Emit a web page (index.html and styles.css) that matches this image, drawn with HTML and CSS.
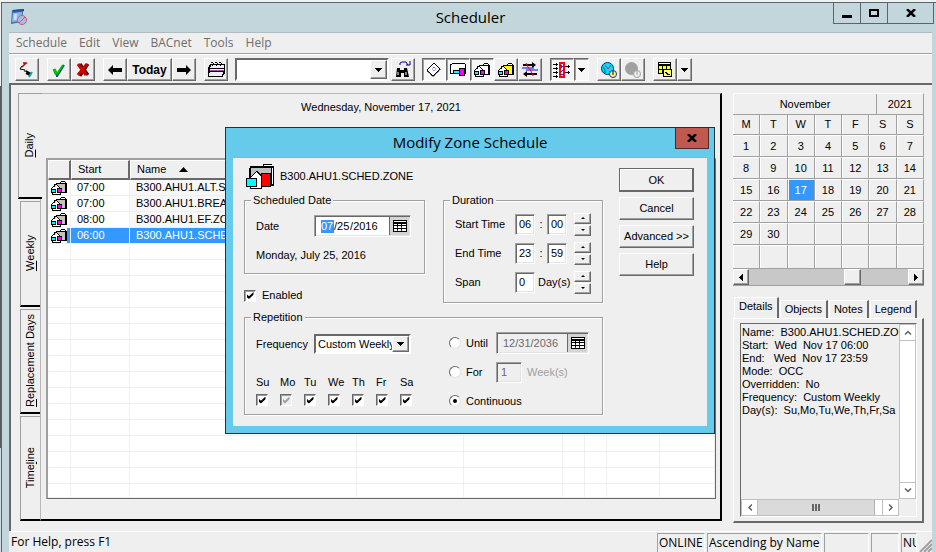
FILE: index.html
```html
<!DOCTYPE html>
<html lang="en">
  <head>
    <meta charset="UTF-8" />
    <meta name="viewport" content="width=device-width, initial-scale=1.0" />
    <title>Scheduler</title>
    <link rel="stylesheet" href="styles.css">
  </head>
  <body>
    <svg class="defs" width="0" height="0">
      <symbol id="house" viewBox="0 0 16 14">
        <path d="M5 2h4V1h1V0h4v1h1v1h1v10H3V3h2z" fill="#000" />
        <path d="M5 3h9v8H4V4h1z" fill="var(--folder, #c0c0c0)" />
        <path d="M10 1h4v1h-4z" fill="#fff" />
        <path d="M1 8l4-4 5 4v5H1z" fill="#fff" />
        <path d="M0 7h1v1H0zM1 6h1v1H1zM2 5h1v1H2zM3 4h1v1H3zM4 3h2v1H4zM6 4h1v1H6zM7 5h1v1H7zM8 6h1v1H8zM9 7h2v1H9z" fill="#000" />
        <path d="M0 8h5v4H0zM6 7h5v5H6zM1 12h9v2H1z" fill="#000" />
        <path d="M1 9h3v2H1z" fill="#0ff" />
        <path d="M7 8h3v3H7z" fill="#f0f" />
        <path d="M2 12h7v1H2z" fill="#fff" />
      </symbol>
      <symbol id="grid" viewBox="0 0 14 12">
        <path d="M0 0h14v12H0z" fill="#000" />
        <path d="M1 1h12v1H1zM1 4h3v1H1zM5 4h3v1H5zM9 4h4v1H9zM1 6h3v2H1zM5 6h3v2H5zM9 6h4v2H9zM1 9h3v2H1zM5 9h3v2H5zM9 9h4v2H9z" fill="#fff" />
        <path d="M4 7h1v1H4zM8 7h1v1H8zM4 10h1v1H4zM8 10h1v1H8z" fill="#a0a" />
      </symbol>
      <symbol id="down" viewBox="0 0 7 4">
        <path d="M0 0h7v1H6v1H5v1H4v1H3V3H2V2H1V1H0z" />
      </symbol>
      <symbol id="left" viewBox="0 0 4 7">
        <path d="M4 0v7H3V6H2V5H1V4H0V3h1V2h1V1h1V0z" />
      </symbol>
      <symbol id="chevron" viewBox="0 0 8 5">
        <path d="M1 4.500L4 1.500L7 4.500" fill="none" stroke="#606060" stroke-width="1.500" />
      </symbol>
    </svg>

    <div class="window">
      <header class="titlebar">
        <svg class="app-icon" width="18" height="18" viewBox="0 0 18 18">
          <path d="M2 2l12-1-1 3-1 10-11 2z" fill="#3f72b8" />
          <path d="M3 2l11-1v2L3 4z" fill="#24508f" />
          <path d="M3 5l9-1-1 9-9 1z" fill="#8db8e6" />
          <path d="M4 6l3-.3-.4 6-3 .4z" fill="#c9e0f5" />
          <circle cx="12" cy="12" r="4.500" fill="#a9bde0" stroke="#d9566b" />
          <path d="M9 15l6-6" stroke="#d9566b" />
        </svg>
        <h1>Scheduler</h1>
        <div class="window-buttons">
          <button aria-label="Minimize"><svg width="10" height="9"><path d="M0 6h10v3H0z" /></svg></button>
          <button aria-label="Maximize"><svg width="10" height="9"><path d="M1 1h8v6H1z" fill="none" stroke="#000" stroke-width="2" /></svg></button>
          <button aria-label="Close" class="wide"><svg width="10" height="8"><path d="M1 0l8 8M9 0L1 8" stroke="#000" stroke-width="2.500" /></svg></button>
        </div>
      </header>

      <div class="client">
        <nav class="menu">
          <button>Schedule</button>
          <button>Edit</button>
          <button>View</button>
          <button>BACnet</button>
          <button>Tools</button>
          <button>Help</button>
        </nav>

        <div class="toolbar">
          <div class="group">
            <button class="tool" aria-label="Connect">
              <svg width="16" height="16" viewBox="0 0 16 16">
                <path d="M3 5l4-4M4 1h4" stroke="#c00" stroke-width="1.500" />
                <path d="M3 4L1 7l5 1v2" stroke="#000" fill="none" />
                <path d="M7 9l5 3M7 11l4 2" stroke="#000" stroke-width="2" />
                <path d="M10 15l3-5" stroke="#0aa" stroke-width="2" />
              </svg>
            </button>
          </div>
          <div class="group">
            <button class="tool" aria-label="Apply">
              <svg width="14" height="14" viewBox="0 0 14 14">
                <path d="M3 7l2 6 7-11" stroke="#004080" stroke-width="2" fill="none" />
                <path d="M2 6l3 5 6-9" stroke="#00c000" stroke-width="2" fill="none" />
                <path d="M2 6l2 5" stroke="#00c000" stroke-width="3" fill="none" />
              </svg>
            </button>
            <button class="tool" aria-label="Discard">
              <svg width="14" height="14" viewBox="0 0 14 14">
                <path d="M4 1l8 11M12 1L4 13" stroke="#400" stroke-width="3" />
                <path d="M2 1l8 11M11 1L2 12" stroke="#d00000" stroke-width="3" />
              </svg>
            </button>
          </div>
          <div class="group">
            <button class="tool" aria-label="Previous day">
              <svg width="14" height="10"><path d="M0 5l5-5v3h9v4H5v3z" /></svg>
            </button>
            <button class="tool today">Today</button>
            <button class="tool" aria-label="Next day">
              <svg width="14" height="10"><path d="M14 5L9 0v3H0v4h9v3z" /></svg>
            </button>
          </div>
          <div class="group">
            <button class="tool" aria-label="Calendar">
              <svg class="px" width="17" height="15" viewBox="0 0 17 15">
                <path d="M2 2h15v10h-1v1h-1v2H0V5h1V3h1z" />
                <path d="M3 3h13v3H2V5h1zM2 7h14v2H2zM2 10h13v2H1v-1h1zM1 12h13v2H1z" fill="#efefef" />
                <path d="M2 8h14v1H2z" fill="#a050a0" />
                <path d="M3 0h2v1h1v2H5v1H4V3h1V1H3zM7 0h2v1h1v2H9v1H8V3h1V1H7zM11 0h2v1h1v2h-1v1h-1V3h1V1h-2z" />
              </svg>
            </button>
          </div>
          <div class="find">
            <div class="combo">
              <select aria-label="Find"><option></option></select>
              <svg class="combo-arrow raised"><use href="#down" x="4" y="7" width="7" height="4" /></svg>
            </div>
            <button class="tool" aria-label="Search">
              <svg width="16" height="17" viewBox="0 0 16 17">
                <path d="M2 7h3v2h4V7h3l2 9H9v-4H6v4H1z" />
                <path d="M3 11v3M11 11v3" stroke="#fff" />
                <path d="M5 4V2l2-1h4l2 3M11 4h4V0" stroke="#008" fill="none" />
              </svg>
            </button>
          </div>
          <div class="group">
            <button class="tool pressed" aria-label="Controller">
              <svg width="16" height="16" viewBox="0 0 16 16">
                <path d="M8 1l6 6-7 7-6-6z" fill="#fff" stroke="#000" />
                <path d="M1 9l6 6 8-8" fill="none" stroke="#000" stroke-dasharray="1 1" />
                <path d="M8 5l2 2-2 2-2-2z" fill="none" stroke="#33f" stroke-dasharray="1 1" />
              </svg>
            </button>
            <button class="tool pressed" aria-label="Group">
              <svg class="px" width="16" height="13" viewBox="0 0 16 13">
                <path d="M1 1h1V0h13v1h1v10H0V1z" />
                <path d="M1 2h1V1h13v9H1z" fill="#fff" />
                <path d="M3 7h6v4H3zM9 5h6v8H9z" />
                <path d="M4 8h5v2H4z" fill="#0ff" />
                <path d="M10 6h4v6h-4z" fill="#f0f" />
              </svg>
            </button>
            <button class="tool pressed house-white" aria-label="Zone"><svg class="px" width="16" height="14"><use href="#house" /></svg></button>
            <button class="tool house-yellow" aria-label="Zone group"><svg class="px" width="16" height="14"><use href="#house" /></svg></button>
            <button class="tool" aria-label="Event">
              <svg width="16" height="15" viewBox="0 0 16 15">
                <path d="M1 3h10M3 12h12" stroke="#000" stroke-width="2" />
                <path d="M10 0l4 3-4 3zM5 9l-4 3 4 3z" />
                <path d="M0 6h12M4 8h12" stroke="#00f" />
                <path d="M4 1l2 4 3 4 2 5" stroke="#f00" fill="none" />
              </svg>
            </button>
          </div>
          <div class="group">
            <button class="tool pressed" aria-label="Columns">
              <svg class="px" width="18" height="16" viewBox="0 0 18 16">
                <path d="M0 2h3V1h1v1h1v1H4v1H3V3H0zM0 6h3V5h1v1h1v1H4v1H3V7H0zM0 10h3V9h1v1h1v1H4v1H3v-1H0zM0 14h3v-1h1v1h1v1H4v1H3v-1H0zM12 4h3V3h1v1h1v1h-1v1h-1V5h-3zM12 10h3V9h1v1h1v1h-1v1h-1v-1h-3z" />
                <path d="M7 1h4v14H7z" fill="#fff" stroke="#f00" stroke-width="2" />
                <path d="M8 3h1v1h1v1H9v1H8zM9 8h1v1H9v1H8V9h1zM8 12h2v1H8z" fill="#22f" />
              </svg>
            </button>
            <button class="tool arrow pressed" aria-label="Column options"><svg width="7" height="4"><use href="#down" /></svg></button>
          </div>
          <div class="group">
            <button class="tool" aria-label="World time">
              <svg width="16" height="16" viewBox="0 0 16 16">
                <circle cx="6.500" cy="6.500" r="6" fill="#0df" stroke="#036" />
                <path d="M4 3l3 4 3-4" stroke="#c33" fill="none" />
                <path d="M2 5l2 3v3M8 9l2 2" stroke="#058" fill="none" />
                <circle cx="12" cy="12" r="3.500" fill="#ff6" stroke="#22a" />
                <path d="M12 9v4" stroke="#000" />
              </svg>
            </button>
            <button class="tool" aria-label="Local time" disabled>
              <svg width="16" height="16" viewBox="0 0 16 16">
                <circle cx="6.500" cy="6.500" r="6.500" fill="#a0a0a0" />
                <circle cx="12" cy="12" r="3.500" fill="#efefef" stroke="#a0a0a0" />
                <path d="M12 9v4" stroke="#a0a0a0" />
              </svg>
            </button>
          </div>
          <div class="group">
            <button class="tool" aria-label="View">
              <svg class="px" width="15" height="15" viewBox="0 0 15 15">
                <path d="M0 0h13v12H0zM5 7h9v8H5z" />
                <path d="M1 1h11v1H1z" fill="#fff" />
                <path d="M1 4h3v3H1zM5 4h3v3H5zM9 4h3v3H9zM1 8h3v3H1z" fill="#ff0" />
                <path d="M6 8h7v6H6z" fill="#ff6" />
                <path d="M7 10h2v1h1v1h2v1h-3v-1H8v-1H7z" />
              </svg>
            </button>
            <button class="tool arrow" aria-label="View options"><svg width="7" height="4"><use href="#down" /></svg></button>
          </div>
        </div>

        <main class="workspace">
          <section class="schedule">
            <div class="side-tabs">
              <button class="active"><span><u>D</u>aily</span></button>
              <button><span><u>W</u>eekly</span></button>
              <button><span><u>R</u>eplacement Days</span></button>
              <button><span>Time<u>l</u>ine</span></button>
            </div>
            <div class="day">
              <h2>Wednesday, November 17, 2021</h2>
              <div class="list">
                <table>
                  <colgroup>
                    <col class="c-icon" />
                    <col class="c-start" />
                    <col class="c-name" />
                    <col class="c-mode" />
                    <col class="c-type" />
                    <col class="c-flag" />
                    <col class="c-flag" />
                    <col class="c-days" />
                    <col />
                  </colgroup>
                  <thead>
                    <tr>
                      <th></th>
                      <th>Start</th>
                      <th>Name <svg class="sort" width="9" height="5"><path d="M0 5l4.500-5L9 5z" /></svg></th>
                      <th></th><th></th><th></th><th></th><th></th><th></th>
                    </tr>
                  </thead>
                  <tbody>
                    <tr>
                      <td><svg class="px" width="16" height="14"><use href="#house" /></svg></td>
                      <td>07:00</td><td>B300.AHU1.ALT.SCHED</td><td></td><td></td><td></td><td></td><td></td><td></td>
                    </tr>
                    <tr>
                      <td><svg class="px" width="16" height="14"><use href="#house" /></svg></td>
                      <td>07:00</td><td>B300.AHU1.BREAK</td><td></td><td></td><td></td><td></td><td></td><td></td>
                    </tr>
                    <tr>
                      <td><svg class="px" width="16" height="14"><use href="#house" /></svg></td>
                      <td>08:00</td><td>B300.AHU1.EF.ZONE</td><td></td><td></td><td></td><td></td><td></td><td></td>
                    </tr>
                    <tr class="selected">
                      <td><svg class="px" width="16" height="14"><use href="#house" /></svg></td>
                      <td>06:00</td><td>B300.AHU1.SCHED.ZONE</td><td></td><td></td><td></td><td></td><td></td><td></td>
                    </tr>
                    <tr class="rest">
                      <td></td><td></td><td></td><td></td><td></td><td></td><td></td><td></td><td></td>
                    </tr>
                  </tbody>
                </table>
              </div>
            </div>
          </section>

          <aside class="side">
            <div class="calendar">
              <div class="cal-head"><span>November</span><span>2021</span></div>
              <table>
                <thead>
                  <tr><th>M</th><th>T</th><th>W</th><th>T</th><th>F</th><th>S</th><th>S</th></tr>
                </thead>
                <tbody>
                  <tr><td>1</td><td>2</td><td>3</td><td>4</td><td>5</td><td>6</td><td>7</td></tr>
                  <tr><td>8</td><td>9</td><td>10</td><td>11</td><td>12</td><td>13</td><td>14</td></tr>
                  <tr><td>15</td><td>16</td><td class="current">17</td><td>18</td><td>19</td><td>20</td><td>21</td></tr>
                  <tr><td>22</td><td>23</td><td>24</td><td>25</td><td>26</td><td>27</td><td>28</td></tr>
                  <tr><td>29</td><td>30</td><td></td><td></td><td></td><td></td><td></td></tr>
                  <tr><td></td><td></td><td></td><td></td><td></td><td></td><td></td></tr>
                </tbody>
              </table>
              <div class="cal-scroll">
                <button class="raised" aria-label="Previous month"><svg width="4" height="7"><use href="#left" /></svg></button>
                <div class="track"><div class="thumb raised"></div></div>
                <button class="raised" aria-label="Next month"><svg class="flip" width="4" height="7"><use href="#left" /></svg></button>
              </div>
            </div>

            <div class="info">
              <div class="info-tabs">
                <button class="active">Details</button>
                <button>Objects</button>
                <button>Notes</button>
                <button>Legend</button>
              </div>
              <div class="info-panel">
                <div class="details">
                  <pre>Name:  B300.AHU1.SCHED.ZONE
Start:  Wed  Nov 17 06:00
End:   Wed  Nov 17 23:59
Mode:  OCC
Overridden:  No
Frequency:  Custom Weekly
Day(s):  Su,Mo,Tu,We,Th,Fr,Sa</pre>
                  <div class="vscroll">
                    <button aria-label="Scroll up"><svg width="8" height="5"><use href="#chevron" /></svg></button>
                    <button aria-label="Scroll down"><svg class="flip" width="8" height="5"><use href="#chevron" /></svg></button>
                  </div>
                  <div class="hscroll">
                    <button aria-label="Scroll left"><svg class="ccw" width="8" height="5"><use href="#chevron" /></svg></button>
                    <div class="hthumb"><i></i><i></i><i></i></div>
                    <button aria-label="Scroll right"><svg class="cw" width="8" height="5"><use href="#chevron" /></svg></button>
                  </div>
                </div>
              </div>
            </div>
          </aside>
        </main>

        <footer class="status">
          <span class="help">For Help, press F1</span>
          <span class="cell online">ONLINE</span>
          <span class="cell order">Ascending by Name</span>
          <span class="cell blank"></span>
          <span class="cell blank-small"></span>
          <span class="cell num">NUM</span>
          <svg class="grip" width="13" height="13"><path d="M1 13L13 1M5 13l8-8M9 13l4-4" stroke="#a0a0a0" stroke-width="2" /></svg>
        </footer>
      </div>
    </div>

    <div class="dialog" role="dialog" aria-labelledby="dialog-title">
      <div class="dialog-title">
        <h2 id="dialog-title">Modify Zone Schedule</h2>
        <button aria-label="Close"><svg width="10" height="8"><path d="M1 0l8 8M9 0L1 8" stroke="#000" stroke-width="2.500" /></svg></button>
      </div>
      <form class="dialog-body">
        <div class="fields">
          <div class="object">
            <svg class="px" width="28" height="25" viewBox="0 0 28 25">
              <path d="M3 4h1V2h13V0h9v2h2v20H3z" />
              <path d="M5 4h20v17H5z" fill="#c0c0c0" />
              <path d="M18 1h8v1h-8zM26 4h1v16h-1z" fill="#fff" />
              <path d="M5 13l6-6 6 6v10H5z" fill="#fff" />
              <path d="M4 13h1v-1h1v-1h1v-1h1V9h1V8h1V7h2v1h1v1h1v1h1v1h1v1h1v2h-1v-1h-1v-1h-1v-1h-1v-1h-1V9h-1V8h-1v1H9v1H8v1H7v1H6v1H5v1H4zM0 14h11v9H0zM15 9h10v14H15zM4 23h12v2H4z" />
              <path d="M1 15h9v7H1z" fill="#0ff" />
              <path d="M16 10h8v12h-8z" fill="#f00" />
              <path d="M5 23h10v1H5z" fill="#fff" />
            </svg>
            <span>B300.AHU1.SCHED.ZONE</span>
          </div>

          <div class="upper">
            <div>
              <fieldset class="scheduled">
                <legend>Scheduled Date</legend>
                <div class="row">
                  <label class="name" for="month">Date</label>
                  <div class="datebox sunken">
                    <input class="d2 picked" id="month" value="07" />/<input class="d2" aria-label="Day" value="25" />/<input class="d4" aria-label="Year" value="2016" />
                    <button type="button" aria-label="Pick date"><svg class="px" width="14" height="12"><use href="#grid" /></svg></button>
                  </div>
                </div>
                <p>Monday, July 25, 2016</p>
              </fieldset>
              <label class="enabled"><input type="checkbox" checked />Enabled</label>
            </div>

            <fieldset class="duration">
              <legend>Duration</legend>
              <div class="row">
                <label class="name" for="sh">Start Time</label>
                <input class="sunken two" id="sh" value="06" />
                <span class="sep">:</span>
                <input class="sunken two" aria-label="Start minutes" value="00" />
                <div class="spin"><button type="button" aria-label="Up"></button><button type="button" aria-label="Down"></button></div>
              </div>
              <div class="row">
                <label class="name" for="eh">End Time</label>
                <input class="sunken two" id="eh" value="23" />
                <span class="sep">:</span>
                <input class="sunken two" aria-label="End minutes" value="59" />
                <div class="spin"><button type="button" aria-label="Up"></button><button type="button" aria-label="Down"></button></div>
              </div>
              <div class="row">
                <label class="name" for="span">Span</label>
                <input class="sunken two" id="span" value="0" />
                <span class="unit">Day(s)</span>
                <div class="spin"><button type="button" aria-label="Up"></button><button type="button" aria-label="Down"></button></div>
              </div>
            </fieldset>
          </div>

          <fieldset class="repetition">
            <legend>Repetition</legend>
            <div>
              <div class="row">
                <label class="name" for="freq">Frequency</label>
                <div class="combo">
                  <select id="freq"><option>Custom Weekly</option></select>
                  <svg class="combo-arrow raised"><use href="#down" x="4" y="5" width="7" height="4" /></svg>
                </div>
              </div>
              <div class="days">
                <label>Su<input type="checkbox" checked /></label>
                <label>Mo<input type="checkbox" checked disabled /></label>
                <label>Tu<input type="checkbox" checked /></label>
                <label>We<input type="checkbox" checked /></label>
                <label>Th<input type="checkbox" checked /></label>
                <label>Fr<input type="checkbox" checked /></label>
                <label>Sa<input type="checkbox" checked /></label>
              </div>
            </div>
            <div class="ends">
              <div class="row">
                <label class="end"><input type="radio" name="end" />Until</label>
                <div class="datebox sunken off">
                  <input class="full" aria-label="Until date" value="12/31/2036" disabled />
                  <button type="button" aria-label="Pick end date"><svg class="px" width="14" height="12"><use href="#grid" /></svg></button>
                </div>
              </div>
              <div class="row">
                <label class="end"><input type="radio" name="end" />For</label>
                <input class="sunken weeks" aria-label="Weeks" value="1" disabled />
                <span class="muted">Week(s)</span>
              </div>
              <div class="row">
                <label class="end"><input type="radio" name="end" checked />Continuous</label>
              </div>
            </div>
          </fieldset>
        </div>

        <div class="actions">
          <button type="button" class="raised default">OK</button>
          <button type="button" class="raised">Cancel</button>
          <button type="button" class="raised">Advanced &gt;&gt;</button>
          <button type="button" class="raised">Help</button>
        </div>
      </form>
    </div>
  </body>
</html>
```
FILE: styles.css
```css
:root {
  --face: #efefef;
  --shade: #a0a0a0;
  --dark: #696969;
  --select: #3399ff;
  --frame: #c3d6dc;
  --ui: "Open Sans", "Noto Sans", sans-serif;
}
* {
  box-sizing: border-box;
}
html {
  height: 100%;
}
body {
  height: 100%;
  margin: 0;
  padding: 2px 0 0 1px;
  overflow: hidden;
  position: relative;
  background: linear-gradient(#f2f2f2 86px, #5c5c5c 86px, #5c5c5c 448px, #cfdbe2 448px);
  font: 11px/13px "Liberation Sans", Arial, sans-serif;
  color: #000;
}
button,
input,
select {
  font: inherit;
  color: inherit;
  margin: 0;
  padding: 0;
  border: 0;
  border-radius: 0;
  background: none;
}
button {
  display: flex;
  align-items: center;
  justify-content: center;
}
h1,
h2,
p,
pre {
  margin: 0;
  font: inherit;
}
svg {
  flex: none;
}
.defs {
  position: absolute;
}
.px {
  shape-rendering: crispEdges;
}
.flip {
  transform: rotate(180deg);
}
.cw {
  transform: rotate(90deg);
}
.ccw {
  transform: rotate(-90deg);
}
.raised {
  background: var(--face);
  border: 1px solid;
  border-color: #fff var(--dark) var(--dark) #fff;
  box-shadow: inset -1px -1px var(--shade);
}
.sunken {
  background: #fff;
  border: 1px solid;
  border-color: var(--shade) #fff #fff var(--shade);
  box-shadow: inset 1px 1px var(--dark), inset -1px -1px #e3e3e3;
}

/* main window */
.window {
  height: 100%;
  display: flex;
  flex-direction: column;
  padding: 0 4px 0 7px;
  background: var(--frame);
  border: solid #57656d;
  border-width: 1px 0 0 1px;
}
.titlebar {
  display: grid;
  grid-template-columns: 1fr auto 1fr;
  height: 29px;
  flex: none;
}
.app-icon {
  margin: 5px 0 0 1px;
}
.titlebar h1 {
  font: 15px/29px var(--ui);
}
.window-buttons {
  display: flex;
  justify-self: end;
  align-self: start;
  margin-right: -2px;
  border: solid #57656d;
  border-width: 0 1px 1px 0;
}
.window-buttons button {
  width: 27px;
  height: 20px;
  border-left: 1px solid #57656d;
}
.window-buttons .wide {
  width: 46px;
}
.client {
  flex: 1;
  min-height: 0;
  display: flex;
  flex-direction: column;
  background: var(--face);
  border-top: 1px solid #b0bcc4;
}
.menu {
  display: flex;
  gap: 12px;
  height: 21px;
  padding-left: 7px;
  border-bottom: 1px solid var(--shade);
  color: #6d6d6d;
  font: 12px/20px var(--ui);
}

/* toolbar */
.toolbar {
  display: flex;
  gap: 8px;
  height: 29px;
  padding: 3px 6px 0;
  border-top: 1px solid #fff;
}
.group,
.find {
  display: flex;
  height: 23px;
}
.find {
  gap: 2px;
  margin: 0 -1px;
}
.tool {
  width: 24px;
  height: 23px;
  background: var(--face);
  border: 1px solid;
  border-color: #fff var(--dark) var(--dark) #fff;
  box-shadow: inset -1px -1px var(--shade);
}
.tool.pressed {
  border-color: var(--dark) #fff #fff var(--dark);
  background: #f7f7f7;
  box-shadow: inset 1px 1px var(--shade);
}
.tool.arrow {
  width: 15px;
}
.tool.today {
  width: 45px;
  font: bold 12px/16px "Liberation Sans", Arial, sans-serif;
}
.house-white {
  --folder: #fff;
}
.house-yellow {
  --folder: #ff0;
}
.combo {
  position: relative;
  display: flex;
}
.combo select {
  appearance: none;
  width: 100%;
  padding: 0 16px 0 2px;
  background: #fff;
  border: 2px solid;
  border-color: var(--dark) #fff #fff var(--dark);
}
.combo-arrow {
  position: absolute;
  top: 2px;
  right: 2px;
  width: 17px;
  height: calc(100% - 4px);
  pointer-events: none;
}
.find .combo {
  width: 154px;
}

/* schedule list */
.workspace {
  flex: 1;
  min-height: 0;
  display: grid;
  grid-template-columns: 1fr 191px;
  gap: 11px;
  padding: 8px 8px 8px 7px;
  border: solid var(--dark);
  border-width: 2px 0 0 2px;
}
.schedule {
  display: flex;
  min-width: 0;
  margin-bottom: 2px;
}
.side-tabs {
  width: 22px;
  flex: none;
  display: flex;
  flex-direction: column;
  gap: 2px;
}
.side-tabs button {
  flex: 1;
  margin-left: 2px;
  border: solid var(--shade);
  border-width: 1px 0 2px 1px;
  border-bottom-color: #000;
}
.side-tabs button span {
  writing-mode: vertical-rl;
  transform: rotate(180deg);
}
.side-tabs .active {
  position: relative;
  flex-basis: 4px;
  margin: 0 -2px 0 0;
  padding-right: 2px;
  background: var(--face);
}
.day {
  flex: 1;
  min-width: 0;
  display: flex;
  flex-direction: column;
  padding: 0 4px 20px 5px;
  border: solid;
  border-width: 1px 2px 2px 1px;
  border-color: #b8b8b8 #000 #000 #b8b8b8;
}
.day h2 {
  padding: 7px 0 44px;
  text-align: center;
}
.list {
  flex: 1;
  min-height: 0;
  overflow: hidden;
  background: #fff;
  border: solid;
  border-width: 2px 1px 1px 2px;
  border-color: var(--shade) var(--dark) var(--dark) var(--shade);
}
.list table {
  width: 100%;
  height: 100%;
  table-layout: fixed;
  border-spacing: 0;
}
.c-icon {
  width: 23px;
}
.c-start {
  width: 59px;
}
.c-name {
  width: 227px;
}
.c-mode {
  width: 107px;
}
.c-type {
  width: 99px;
}
.c-flag {
  width: 22px;
}
.c-days {
  width: 53px;
}
.list th {
  height: 20px;
  padding: 0 0 0 6px;
  background: var(--face);
  border: solid;
  border-width: 1px 2px 2px 1px;
  border-color: #fff var(--dark) var(--dark) #fff;
  text-align: left;
  font-weight: normal;
}
.list .sort {
  margin-left: 10px;
  vertical-align: 1px;
}
.list td {
  height: 16px;
  padding: 0 0 0 6px;
  line-height: 15px;
  white-space: nowrap;
  overflow: hidden;
  border: solid #efefef;
  border-width: 0 1px 1px 0;
}
.list td:first-child {
  padding-left: 3px;
}
.list td svg {
  display: block;
}
.list td:nth-child(3) {
  background: #f7f7f7;
}
.list .selected td {
  background: var(--select);
  color: #fff;
}
.list .selected td:first-child {
  background: linear-gradient(to right, #fff 19px, var(--select) 19px);
}
.list .rest td {
  height: auto;
  background: repeating-linear-gradient(#fff 0 15px, #efefef 15px 16px);
}

/* calendar */
.side {
  display: flex;
  flex-direction: column;
  gap: 11px;
  min-width: 0;
}
.cal-head {
  display: grid;
  grid-template-columns: 142px 1fr;
  height: 21px;
  border: solid;
  border-width: 1px 1px 0 1px;
  border-color: #fff var(--shade) #fff #fff;
  line-height: 21px;
  text-align: center;
}
.cal-head span + span {
  border-left: 1px solid var(--shade);
}
.calendar table {
  width: 100%;
  table-layout: fixed;
  border-spacing: 0;
}
.calendar th,
.calendar td {
  height: 22px;
  padding: 0;
  border: solid;
  border-width: 1px 1px 1px 0;
  border-color: #fff var(--shade) var(--shade) #fff;
  box-shadow: inset 1px 0 #fff;
  text-align: center;
  font-weight: normal;
}
.calendar th {
  height: 21px;
  border-top-color: var(--shade);
}
.calendar tr:last-child td {
  height: 24px;
}
.calendar .current {
  background: var(--select);
  color: #fff;
}
.cal-scroll {
  display: flex;
  height: 17px;
  border-bottom: 1px solid var(--shade);
}
.cal-scroll button {
  width: 16px;
}
.track {
  flex: 1;
  display: flex;
  background: #c8c8c8;
}
.thumb {
  width: 17px;
  margin-left: 60%;
}

/* details */
.info {
  flex: 1;
  min-height: 0;
  display: flex;
  flex-direction: column;
}
.info-tabs {
  display: flex;
  align-items: flex-end;
  gap: 1px;
  padding-left: 1px;
}
.info-tabs button {
  height: 18px;
  padding: 0 4px;
  border: solid;
  border-width: 1px 2px 0 1px;
  border-color: #fff var(--dark) #fff #fff;
}
.info-tabs .active {
  height: 21px;
  padding-bottom: 3px;
}
.info-panel {
  flex: 1;
  min-height: 0;
  padding: 4px 5px 4px 6px;
  border: solid;
  border-width: 1px 2px 2px 1px;
  border-color: #fff var(--dark) var(--dark) #fff;
}
.details {
  height: 100%;
  display: grid;
  grid-template: 1fr 17px / 1fr 17px;
  border: 1px solid;
  border-color: var(--dark) #fff #fff var(--dark);
}
.details pre {
  min-width: 0;
  overflow: hidden;
  padding: 2px 0 0 1px;
}
.vscroll,
.hscroll {
  display: flex;
  background: #fff;
}
.vscroll {
  flex-direction: column;
  justify-content: space-between;
  border: solid #c0c0c0;
  border-width: 0 1px;
}
.vscroll button {
  height: 17px;
  border: solid #c0c0c0;
  border-width: 1px 0;
}
.hscroll {
  border: solid #c0c0c0;
  border-width: 1px 0;
}
.hscroll button {
  width: 17px;
  border: solid #c0c0c0;
  border-width: 0 1px;
}
.hthumb {
  flex: 1;
  display: flex;
  align-items: center;
  justify-content: center;
  gap: 1px;
  margin-right: 7px;
  background: #dadada;
  border-right: 1px solid #b0b0b0;
}
.hthumb i {
  width: 2px;
  height: 7px;
  background: #666;
}

/* status bar */
.status {
  display: flex;
  gap: 2px;
  flex: none;
  height: 21px;
  padding-top: 1px;
  border-top: 1px solid #fff;
  font: 12px/18px var(--ui);
  white-space: nowrap;
}
.status .help {
  flex: 1;
  padding-left: 2px;
}
.cell {
  padding-left: 1px;
  overflow: hidden;
  border: solid;
  border-width: 1px 1px 0 1px;
  border-color: var(--shade) #fff #fff var(--shade);
}
.online {
  width: 48px;
}
.order {
  width: 115px;
}
.blank {
  width: 45px;
}
.blank-small {
  width: 28px;
}
.num {
  width: 16px;
}
.grip {
  align-self: flex-end;
}

/* dialog */
.dialog {
  position: absolute;
  left: 225px;
  top: 127px;
  width: 490px;
  padding: 0 7px 7px;
  background: #66caea;
  border: 1px solid #1f333c;
}
.dialog-title {
  display: flex;
  justify-content: center;
  height: 29px;
  position: relative;
}
.dialog-title h2 {
  font: 15px/29px var(--ui);
}
.dialog-title button {
  position: absolute;
  right: -2px;
  top: 0;
  width: 34px;
  height: 21px;
  background: #c1594f;
  border: solid #4a2a2a;
  border-width: 0 1px 1px;
}
.dialog-body {
  display: flex;
  justify-content: space-between;
  padding: 6px 13px 11px 11px;
  background: var(--face);
  border-top: 1px solid #8fb0bf;
}
.object {
  display: flex;
  align-items: center;
  gap: 6px;
  height: 24px;
  padding-left: 2px;
}
.fields {
  width: 359px;
}
.upper {
  display: flex;
  justify-content: space-between;
  margin-top: 6px;
}
fieldset {
  min-width: 0;
  margin: 0;
  padding: 0 0 0 11px;
  border: 1px solid var(--shade);
  box-shadow: 1px 1px #fff, inset 1px 1px #fff;
}
legend {
  margin-left: -5px;
  padding: 0 2px;
  background: var(--face);
}
.row {
  display: flex;
  align-items: center;
}
.scheduled {
  width: 181px;
  height: 80px;
}
.scheduled .row {
  padding: 8px 0 12px;
}
.scheduled .name,
.repetition .name {
  width: 58px;
}
.datebox {
  display: flex;
  align-items: center;
  height: 22px;
  width: 97px;
  padding: 1px 1px 1px 6px;
}
.datebox input {
  height: 13px;
}
.d2 {
  width: 13px;
}
.d4 {
  width: 26px;
}
.picked {
  background: var(--select);
  color: #fff;
}
.datebox button {
  width: 20px;
  height: 18px;
  margin-left: auto;
  background: #d4d4d4;
  border-left: 1px solid var(--dark);
}
.datebox.off {
  width: 93px;
  background: var(--face);
  color: var(--dark);
}
.datebox .full {
  width: 60px;
}
.enabled {
  display: flex;
  align-items: center;
  gap: 6px;
  padding-top: 15px;
}
input[type="checkbox"] {
  appearance: none;
  display: grid;
  place-items: center;
  width: 12px;
  height: 12px;
  background: #fff;
  border: 1px solid;
  border-color: var(--dark) #fff #fff var(--dark);
  box-shadow: inset 1px 1px var(--shade);
}
input[type="checkbox"]:checked::before {
  content: "";
  width: 7px;
  height: 7px;
  background: #000;
  clip-path: polygon(0 30%, 35% 60%, 100% 0, 100% 40%, 35% 100%, 0 70%);
}
input[type="checkbox"]:disabled {
  background: var(--face);
}
input[type="checkbox"]:disabled::before {
  background: var(--shade);
}
input[type="radio"] {
  appearance: none;
  display: grid;
  place-items: center;
  width: 12px;
  height: 12px;
  background: #fff;
  border: 1px solid;
  border-color: var(--dark) #e3e3e3 #e3e3e3 var(--dark);
  border-radius: 50%;
}
input[type="radio"]:checked::before {
  content: "";
  width: 4px;
  height: 4px;
  background: #000;
  border-radius: 50%;
}
.duration {
  width: 160px;
  height: 109px;
  padding-top: 5px;
}
.duration .row {
  height: 24px;
  margin-bottom: 5px;
}
.duration .name {
  width: 60px;
}
.two {
  width: 20px;
  height: 21px;
  padding-left: 3px;
}
.sep {
  width: 12px;
  text-align: center;
}
.unit {
  width: 32px;
  text-align: right;
}
.two + .unit {
  margin-left: 3px;
}
.spin {
  display: grid;
  gap: 1px;
  margin-left: 7px;
}
.unit + .spin {
  margin-left: 4px;
}
.spin button {
  width: 17px;
  height: 11px;
  border: 1px solid;
  border-color: #fff var(--dark) var(--dark) #fff;
  box-shadow: inset -1px -1px var(--shade);
}
.spin button::before {
  content: "";
  border: solid transparent;
  border-width: 0 2px 2px;
  border-bottom-color: #000;
}
.spin button + button::before {
  border-width: 2px 2px 0;
  border-top-color: #000;
}
.repetition {
  display: flex;
  height: 104px;
  margin-top: 8px;
}
.repetition .combo {
  width: 97px;
  height: 20px;
}
.repetition > div:first-of-type {
  padding-top: 10px;
}
.days {
  display: flex;
  padding-top: 22px;
}
.days label {
  display: grid;
  gap: 5px;
  width: 24px;
}
.ends {
  margin-left: 25px;
  padding-top: 8px;
}
.ends .row {
  height: 22px;
  margin-bottom: 7px;
}
.end {
  display: flex;
  align-items: center;
  gap: 5px;
  min-width: 47px;
}
.weeks {
  width: 26px;
  height: 21px;
  padding-left: 4px;
  margin-right: 5px;
  background: var(--face);
  color: var(--dark);
}
.muted {
  color: var(--shade);
}
.actions {
  display: flex;
  flex-direction: column;
  gap: 5px;
  width: 75px;
  padding-top: 4px;
}
.actions button {
  height: 23px;
}
.actions .default {
  height: 24px;
  border: 1px solid var(--dark);
  box-shadow: inset -1px -1px var(--dark), inset 1px 1px #fff;
}
```
